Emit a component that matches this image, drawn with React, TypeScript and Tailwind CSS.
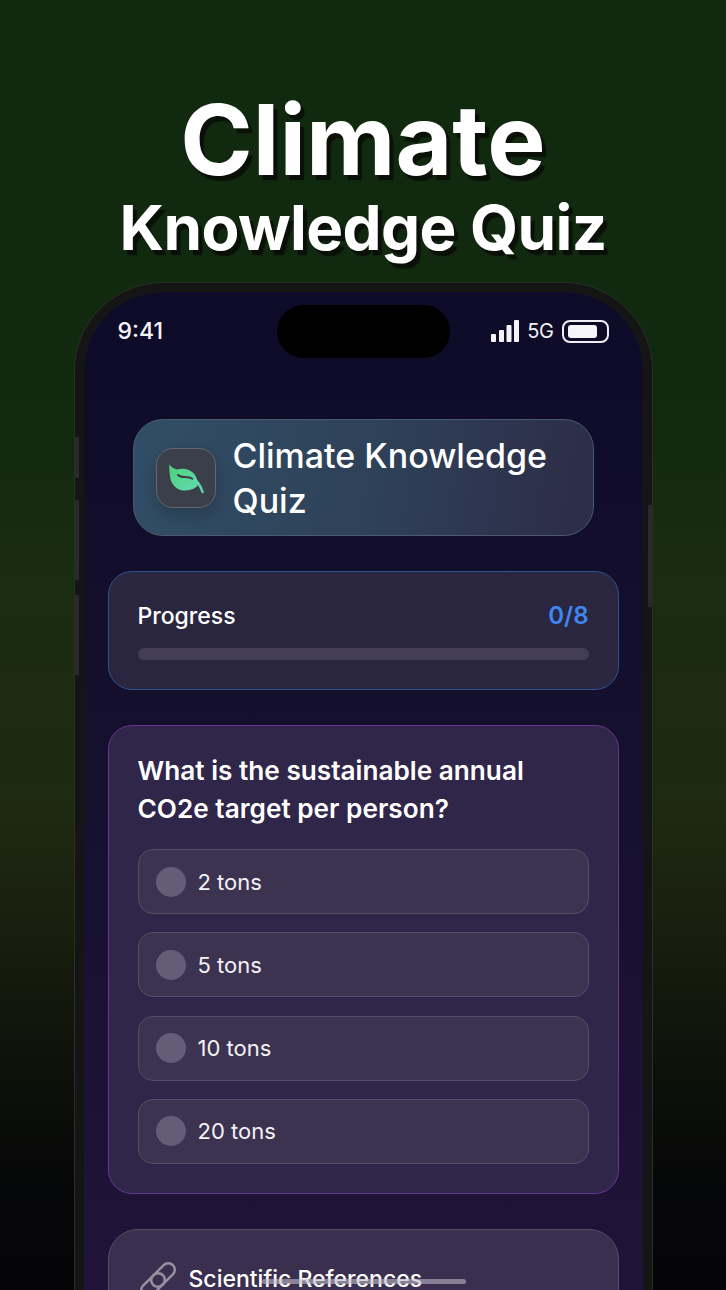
import React from "react";

const options = ["2 tons", "5 tons", "10 tons", "20 tons"];

function Leaf() {
  return (
    <svg width="40" height="32" viewBox="0 0 40 32" fill="none">
      <defs>
        <linearGradient id="leaf" x1="0" y1="0" x2="1" y2="1">
          <stop offset="0" stopColor="#4fd17a" />
          <stop offset="1" stopColor="#62d9ae" />
        </linearGradient>
      </defs>
      <path
        d="M3.300 2.300C5 5 8 7 11 7.500C17 5.500 25 7 29 13C31.500 17 32 21 31.500 24C27 28 21 28.500 18 28.500C12 29 6 23 4.500 17C3.500 12 3 6 3.300 2.300Z"
        fill="url(#leaf)"
      />
      <path d="M12 13C16 17 21 13 27 17" stroke="#3a3d48" strokeWidth="2" strokeLinecap="round" />
      <path d="M28 17C32 20 35 25 36.500 30" stroke="#5fd8ae" strokeWidth="2.500" strokeLinecap="round" />
    </svg>
  );
}

function StatusIcons() {
  return (
    <div className="flex items-center">
      <svg width="28" height="22" viewBox="0 0 28 22" fill="#f4f4f8">
        <rect x="0" y="14" width="5" height="8" rx="1" />
        <rect x="8" y="10" width="5" height="12" rx="1" />
        <rect x="15.500" y="5" width="5" height="17" rx="1" />
        <rect x="23" y="0" width="5" height="22" rx="1" />
      </svg>
      <span className="ml-[8px] text-[20px] leading-none tracking-[-0.02em] text-[#f0f0f5]">5G</span>
      <div className="ml-[8px] flex h-[23px] w-[47px] items-center rounded-[8px] border-2 border-[#eeeef3] px-[4.500px]">
        <div className="h-[13px] w-[29px] rounded-[3px] bg-[#f6f6fa]" />
      </div>
    </div>
  );
}

function LinkIcon() {
  return (
    <svg width="40" height="40" viewBox="0 0 40 40" fill="none" stroke="#96909f" strokeWidth="2.500">
      <rect x="11" y="8.500" width="28" height="13" rx="6.500" transform="rotate(-45 25 15)" />
      <rect x="1" y="18.500" width="28" height="13" rx="6.500" transform="rotate(-45 15 25)" />
    </svg>
  );
}

export default function App() {
  return (
    <div className="relative h-[1290px] w-[726px] overflow-hidden bg-[linear-gradient(180deg,#10290f_0%,#10290f_30%,#1a2c12_45%,#1e2a12_62%,#191f0e_72%,#0f120a_82%,#060708_92%,#050508_100%)] font-['Inter',sans-serif]">
      {/* Heading */}
      <div className="flex flex-col items-center pt-[87px] text-white [text-shadow:4px_5px_1px_#0a1008]">
        <h1 className="text-[98px] font-bold leading-[106px]">Climate</h1>
        <h2 className="text-[62px] font-bold leading-[70px] tracking-[-0.01em]">Knowledge Quiz</h2>
      </div>

      {/* Phone */}
      <div className="relative mx-auto mt-[20px] h-[1100px] w-[577px] rounded-t-[88px] border-[9px] border-b-0 border-[#151515] shadow-[0_0_0_1px_#2b2f2a]">
        {/* side buttons */}
        <div className="absolute left-[-10px] top-[145px] h-[41px] w-[5px] bg-[#2a2a2a]" />
        <div className="absolute left-[-10px] top-[208px] h-[80px] w-[5px] bg-[#2a2a2a]" />
        <div className="absolute left-[-10px] top-[303px] h-[80px] w-[5px] bg-[#2a2a2a]" />
        <div className="absolute right-[-10px] top-[213px] h-[102px] w-[5px] bg-[#2a2a2a]" />

        <div className="min-h-full rounded-t-[79px] bg-[linear-gradient(180deg,#0d0b28_0%,#15102e_40%,#24143c_100%)] px-[24px]">
          {/* Status bar */}
          <div className="relative flex h-[78px] items-center justify-between pl-[10px] pr-[10px]">
            <span className="text-[23px] font-medium leading-[28px] text-[#f4f4f8]">9:41</span>
            <div className="absolute left-[169px] top-[13px] h-[53px] w-[173px] rounded-[27px] bg-black" />
            <StatusIcons />
          </div>

          {/* Title card */}
          <div className="mx-[25px] mt-[49px] flex h-[117px] items-center gap-[17px] rounded-[30px] border border-[#4c5a70] bg-[linear-gradient(100deg,#314e66_0%,#2e4259_50%,#2c2c45_100%)] pl-[22px] pr-[30px]">
            <div className="flex h-[60px] w-[60px] shrink-0 items-center justify-center rounded-[17px] border border-[#62666f] bg-[#3b3f4a] shadow-[0_6px_16px_rgba(0,0,0,0.2)]">
              <Leaf />
            </div>
            <p className="text-[34px] font-medium leading-[45px] text-white">Climate Knowledge Quiz</p>
          </div>

          {/* Progress */}
          <div className="mt-[35px] h-[119px] rounded-[24px] border-[1.500px] border-[#2f5190] bg-[#2b2640] px-[29px] pt-[29px]">
            <div className="flex items-center justify-between">
              <span className="text-[23px] font-medium leading-[30px] text-white">Progress</span>
              <span className="text-[24px] font-semibold leading-[30px] text-[#3f86ee]">0/8</span>
            </div>
            <div className="mt-[17px] h-[12px] rounded-full bg-[#433d55]" />
          </div>

          {/* Question */}
          <div className="mt-[35px] rounded-[24px] border-[1.500px] border-[#6b3590] bg-[#30264a] px-[29px] pb-[29px] pt-[26px]">
            <p className="text-[26.200px] font-semibold leading-[38px] text-white">What is the sustainable annual CO2e target per person?</p>
            <div className="mt-[21px] flex flex-col gap-[18.330px]">
              {options.map((o) => (
                <div key={o} className="flex h-[65px] items-center gap-[12px] rounded-[15px] border border-[#564e68] bg-[#3c3350] pl-[17px]">
                  <div className="h-[30px] w-[30px] rounded-full bg-[#655c78]" />
                  <span className="text-[22px] leading-[30px] text-[#f4f2f7]">{o}</span>
                </div>
              ))}
            </div>
          </div>

          {/* References */}
          <div className="mt-[35px] h-[200px] rounded-t-[30px] border border-[#584e6b] bg-[#3a2f4e] pl-[29px] pt-[30px]">
            <div className="flex items-start gap-[11px]">
              <LinkIcon />
              <span className="mt-[9px] text-[23px] font-medium leading-[20px] text-white">Scientific References</span>
            </div>
          </div>
        </div>
      </div>

      {/* Home indicator */}
      <div className="absolute left-[262px] top-[1279px] h-[5px] w-[204px] rounded-full bg-[rgba(190,186,200,0.6)]" />
    </div>
  );
}
